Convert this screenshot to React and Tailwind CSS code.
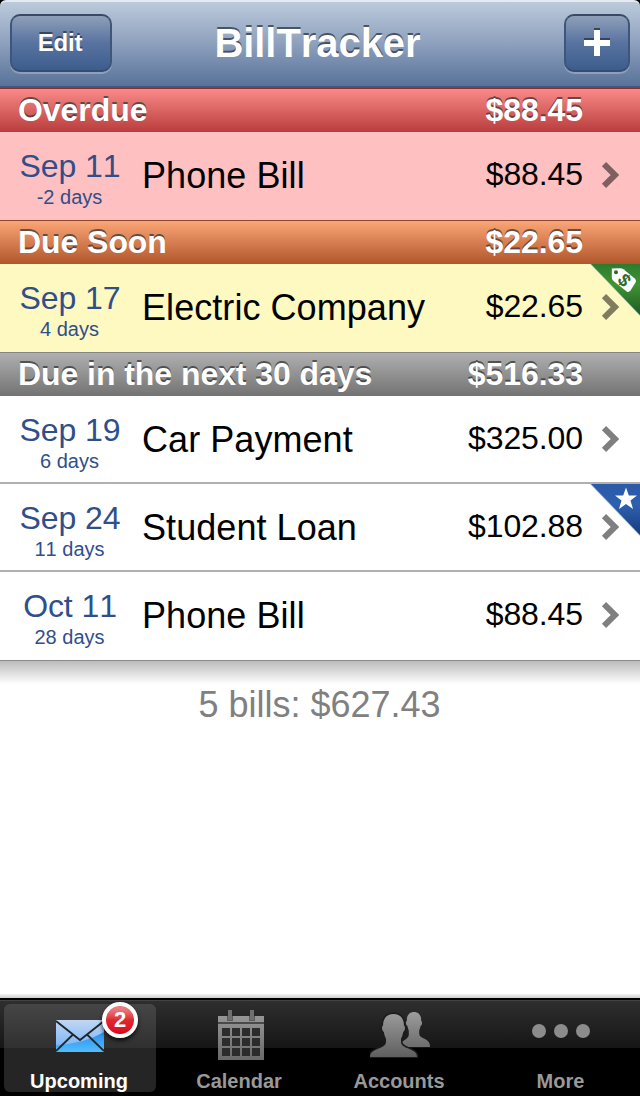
import React, { useState } from "react";
import clsx from "clsx";

const sections = [
  {
    title: "Overdue",
    total: "$88.45",
    header: "border-[#8a2c30] from-[#fa8a88] to-[#b93c3d]",
    row: "bg-[#ffc0c1]",
    bills: [
      { date: "Sep 11", due: "-2 days", name: "Phone Bill", amount: "$88.45" },
    ],
  },
  {
    title: "Due Soon",
    total: "$22.65",
    header: "border-[#91472b] from-[#fba676] to-[#b1562b]",
    row: "bg-[#fef8c1]",
    bills: [
      {
        date: "Sep 17",
        due: "4 days",
        name: "Electric Company",
        amount: "$22.65",
        ribbon: "tag",
      },
    ],
  },
  {
    title: "Due in the next 30 days",
    total: "$516.33",
    header: "border-[#858585] from-[#b0b0b0] to-[#737373]",
    row: "bg-white",
    bills: [
      { date: "Sep 19", due: "6 days", name: "Car Payment", amount: "$325.00" },
      {
        date: "Sep 24",
        due: "11 days",
        name: "Student Loan",
        amount: "$102.88",
        ribbon: "star",
      },
      { date: "Oct 11", due: "28 days", name: "Phone Bill", amount: "$88.45" },
    ],
  },
];

const Chevron = () => (
  <svg width="18" height="26" viewBox="0 0 18 26" className="shrink-0">
    <path
      d="M3 2.200L14 13L3 23.800"
      fill="none"
      stroke="#000"
      strokeOpacity="0.5"
      strokeWidth="6"
    />
  </svg>
);

const Ribbon = ({ type }) => (
  <svg
    width="50"
    height="52"
    viewBox="0 0 50 52"
    className="absolute top-0 right-0"
  >
    <defs>
      <linearGradient id="greenRibbon" x1="0" y1="0" x2="0" y2="1">
        <stop offset="0" stopColor="#2f7a2d" />
        <stop offset="0.4" stopColor="#3f9433" />
        <stop offset="1" stopColor="#1d5622" />
      </linearGradient>
      <linearGradient id="blueRibbon" x1="0" y1="0" x2="0" y2="1">
        <stop offset="0" stopColor="#2a5aa8" />
        <stop offset="0.4" stopColor="#2e60b0" />
        <stop offset="1" stopColor="#183a78" />
      </linearGradient>
    </defs>
    <path
      d="M0 0H50V52Z"
      fill={type === "tag" ? "url(#greenRibbon)" : "url(#blueRibbon)"}
    />
    <path d="M0 0L50 52" stroke="#fff" strokeOpacity="0.6" strokeWidth="1.5" />
    {type === "tag" ? (
      <>
        <path
          d="M21.800 4.500L30 4.200Q32 4.200 33.500 5.200L44.800 14.500Q46.600 16 45.800 18L40.500 26.500Q39 28.500 37 27.800L23.500 17Q21.800 15.500 21.800 13.500Z"
          fill="#fff"
        />
        <circle cx="26" cy="8.200" r="2" fill="#2a6b29" />
        <text
          x="34.500"
          y="22.300"
          transform="rotate(48 34.500 16)"
          textAnchor="middle"
          fontSize="18"
          fontWeight="bold"
          fill="#2a6b29"
        >
          $
        </text>
      </>
    ) : (
      <path
        d="M36 3.500L38.800 11.500H47L40.500 16.500L43 25L36 20L29 25L31.500 16.500L25 11.500H33.200Z"
        fill="#fff"
      />
    )}
  </svg>
);

const BillRow = ({ bill, color, divider }) => (
  <div
    className={clsx(
      "relative flex h-[88px] items-center pr-[21px]",
      color,
      divider && "border-b-2 border-[#b0b0b0]"
    )}
  >
    <div className="flex h-[88px] w-[140px] shrink-0 flex-col items-center self-start pt-4 text-[#2f4f8b]">
      <div className="text-[32px] leading-9 tracking-[-0.1px]">{bill.date}</div>
      <div className="mt-px pr-px text-[20px] leading-6">{bill.due}</div>
    </div>
    <div className="h-[88px] flex-1 self-start pl-0.5 text-[36px] leading-[87px] tracking-[0.06px] text-black">
      {bill.name}
    </div>
    <div className="mr-[18px] h-[88px] self-start text-[32px] leading-[84px] tracking-[-0.1px] text-black">
      {bill.amount}
    </div>
    <div className="flex h-[88px] items-center self-start pb-0.5">
      <Chevron />
    </div>
    {bill.ribbon ? <Ribbon type={bill.ribbon} /> : <></>}
  </div>
);

const SectionHeader = ({ section }) => (
  <div
    className={clsx(
      "flex h-11 justify-between border-t bg-linear-to-b pr-14 pl-[18px] text-[32px] leading-[42px] font-bold tracking-[-0.06px] text-white [text-shadow:0_-2px_0_rgba(60,60,60,0.8)]",
      section.header
    )}
  >
    <div>{section.title}</div>
    <div className="pr-px">{section.total}</div>
  </div>
);

const navButton =
  "flex h-[58px] cursor-pointer items-center justify-center rounded-[10px] border-2 border-t-[#3a4a62] border-x-[#3f5678] border-b-[#334d77] bg-linear-to-b from-[#8f9fb9] via-[#5873a0] to-[#3d5d8d] shadow-[0_2px_0_rgba(255,255,255,0.25)]";

const NavBar = () => (
  <div className="bg-black">
    <div className="flex h-[88px] items-center justify-between rounded-t-[6px] border-t-2 border-b-2 border-t-[#e3eaf2] border-b-[#3f5880] bg-linear-to-b from-[#bccadb] via-[#8da0bd] to-[#587299] px-2.5 pb-0.5">
      <button
        className={clsx(
          navButton,
          "w-[102px] pr-0.5 text-[24px] font-bold tracking-[-0.2px] text-white [text-shadow:0_-2px_0_rgba(40,50,65,0.75)]"
        )}
      >
        Edit
      </button>
      <div className="pr-[41px] text-[40px] leading-[84px] font-bold tracking-[-0.06px] text-white [text-shadow:0_-2px_0_rgba(50,60,75,0.8)]">
        BillTracker
      </div>
      <button className={clsx(navButton, "w-[66px]")}>
        <svg width="26" height="28" viewBox="0 0 26 28" className="mb-0.5">
          <path d="M10 0H16V10H26V16H16V26H10V16H0V10H10Z" fill="#35445b" />
          <path d="M10 2H16V12H26V18H16V28H10V18H0V12H10Z" fill="#fff" />
        </svg>
      </button>
    </div>
  </div>
);

const MailIcon = () => (
  <svg width="48" height="32" viewBox="0 0 48 32">
    <defs>
      <linearGradient id="mailTop" x1="0" y1="0" x2="0" y2="1">
        <stop offset="0" stopColor="#c2d6f5" />
        <stop offset="1" stopColor="#6fb0f3" />
      </linearGradient>
      <linearGradient id="mailBottom" x1="0" y1="0" x2="0" y2="1">
        <stop offset="0" stopColor="#2a8ff0" />
        <stop offset="1" stopColor="#51bdfc" />
      </linearGradient>
    </defs>
    <rect width="48" height="32" fill="url(#mailTop)" />
    <path d="M0 25Q28 24 48 12V32H0Z" fill="url(#mailBottom)" />
    <path
      d="M0 1L24 20L48 1M0 31L17 14.500M48 31L31 14.500"
      fill="none"
      stroke="#20262e"
      strokeWidth="1.800"
    />
  </svg>
);

const CalendarIcon = () => (
  <svg width="46" height="50" viewBox="0 0 46 50">
    <defs>
      <linearGradient id="calFill" x1="0" y1="0" x2="0" y2="1">
        <stop offset="0" stopColor="#969696" />
        <stop offset="1" stopColor="#696969" />
      </linearGradient>
    </defs>
    <path d="M0 6H46V50H0Z" fill="url(#calFill)" />
    <path d="M0 13H46" stroke="#4a4a4a" strokeWidth="2" />
    <path d="M9 6h6v5h-6zM31 6h6v5h-6z" fill="#5c5c5c" />
    <path d="M10 0h4v10h-4zM32 0h4v10h-4z" fill="#707070" />
    {[18, 28, 38].map((y) =>
      [4, 14, 24, 34].map((x) => (
        <rect key={`${x}-${y}`} x={x} y={y} width="8" height="8" fill="#2c2c2c" />
      ))
    )}
  </svg>
);

const AccountsIcon = () => (
  <svg width="60" height="46" viewBox="0 0 60 46">
    <defs>
      <linearGradient
        id="peopleFill"
        x1="0"
        y1="0"
        x2="0"
        y2="46"
        gradientUnits="userSpaceOnUse"
      >
        <stop offset="0" stopColor="#9c9c9c" />
        <stop offset="1" stopColor="#5e5e5e" />
      </linearGradient>
    </defs>
    <path
      d="M44 0C48.500 0 51.500 3.200 51.200 9C52.500 9.500 52.300 13 50.600 13.800C50.200 16 49.600 17.500 49.200 18.700V21.500C49.200 24 51 25 54 26.500C58 28.500 60 30.500 60 35H32V30C34 28 38.800 26.500 38.800 22.500V18.700C38.400 17.500 37.800 16 37.400 13.800C35.700 13 35.500 9.500 36.800 9C36.500 3.200 39.500 0 44 0Z"
      fill="url(#peopleFill)"
    />
    <path
      d="M23.500 2C30 2 34.200 6.500 33.900 13.500C35.600 14.200 35.300 19 33.200 20C32.700 23 31.800 25.200 31 26.800V30C31 33 33.500 34.500 37 36C44 38.800 47 40.500 47 45H0C0 40.500 3 38.800 10 36C13.500 34.500 16 33 16 30V26.800C15.200 25.200 14.300 23 13.800 20C11.700 19 11.400 14.200 13.100 13.500C12.800 6.500 17 2 23.500 2Z"
      fill="url(#peopleFill)"
      stroke="#1b1b1b"
      strokeWidth="3"
      paintOrder="stroke"
    />
  </svg>
);

const MoreIcon = () => (
  <svg width="60" height="16" viewBox="0 0 60 16">
    <circle cx="8" cy="8" r="7" fill="#8c8c8c" />
    <circle cx="30" cy="8" r="7" fill="#8c8c8c" />
    <circle cx="52" cy="8" r="7" fill="#8c8c8c" />
  </svg>
);

const tabs = [
  { name: "Upcoming", icon: <MailIcon />, badge: 2, pad: "pt-4" },
  { name: "Calendar", icon: <CalendarIcon />, pad: "pt-1.5 pl-0.5" },
  { name: "Accounts", icon: <AccountsIcon />, pad: "pt-2" },
  { name: "More", icon: <MoreIcon />, pad: "pt-[19px] pl-0.5" },
];

const TabBar = ({ active, setActive }) => (
  <div className="flex h-[98px] border-t-2 border-black bg-[linear-gradient(to_bottom,#434343_0,#434343_1px,#2e2e2e_1px,#161616_48px,#000_48px)] px-1 pt-1">
    {tabs.map((tab) => (
      <div key={tab.name} className="mr-2 w-[152px] shrink-0">
        <div
          className={clsx(
            "relative flex h-[88px] cursor-pointer flex-col items-center rounded-[6px]",
            active === tab.name &&
              "bg-[linear-gradient(to_bottom,#464646_0,#303030_44px,#252525_44px)]"
          )}
          onClick={() => setActive(tab.name)}
        >
          <div className={clsx("h-[65px] shrink-0", tab.pad)}>{tab.icon}</div>
          <div
            className={clsx(
              "text-[20px] leading-6 font-bold",
              active === tab.name ? "text-white" : "text-[#999]",
              tab.name === "More" ? "pl-px" : "pr-0.5"
            )}
          >
            {tab.name}
          </div>
          {tab.badge ? (
            <div className="absolute -top-0.5 right-[18px] flex size-9 items-center justify-center rounded-full border-4 border-white bg-linear-to-b from-[#ea7b80] from-10% via-[#dc2832] via-50% to-[#e00015] text-[22px] leading-none font-bold text-white shadow-[0_3px_4px_rgba(0,0,0,0.7)]">
              {tab.badge}
            </div>
          ) : (
            <></>
          )}
        </div>
      </div>
    ))}
  </div>
);

const App = () => {
  const [active, setActive] = useState("Upcoming");
  return (
    <div className="flex h-[1096px] w-[640px] flex-col overflow-hidden bg-white font-['Liberation_Sans',Arial,sans-serif] [font-kerning:none]">
      <NavBar />
      <div className="flex flex-1 flex-col">
        {sections.map((section) => (
          <div key={section.title}>
            <SectionHeader section={section} />
            {section.bills.map((bill, i) => (
              <BillRow
                key={bill.date}
                bill={bill}
                color={section.row}
                divider={i < section.bills.length - 1}
              />
            ))}
          </div>
        ))}
        <div className="h-6 border-t border-[#8b8b8b] bg-linear-to-b from-[#bcbcbc] to-white"></div>
        <div className="pr-px text-center text-[36px] leading-[41px] text-[#808080]">
          5 bills: $627.43
        </div>
      </div>
      <div className="h-1 bg-linear-to-b from-[#f2f2f2] to-[#cfcfcf]"></div>
      <TabBar active={active} setActive={setActive} />
    </div>
  );
};

export default App;
